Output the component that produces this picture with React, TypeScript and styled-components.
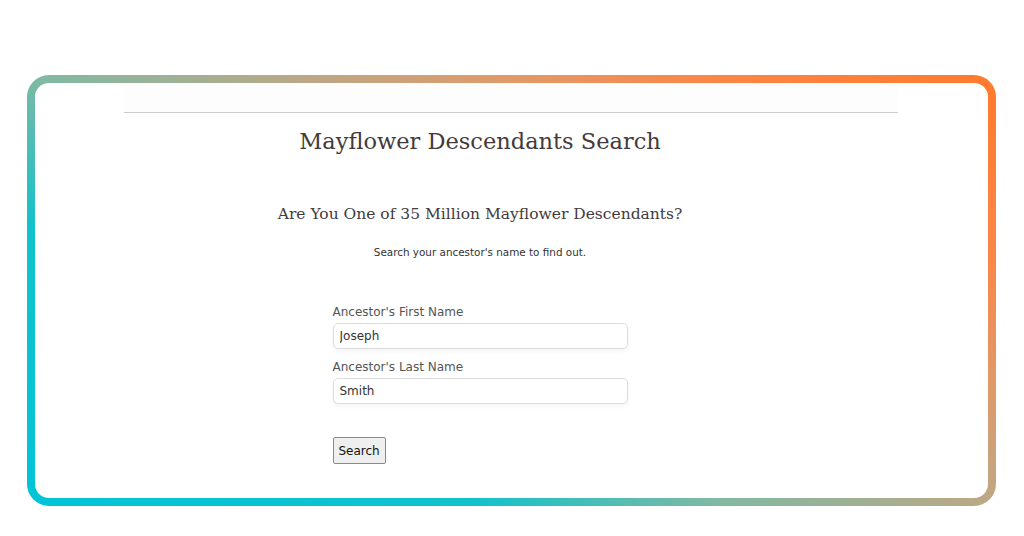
import styled, { createGlobalStyle } from 'styled-components';

const GlobalStyle = createGlobalStyle`
  html, body {
    margin: 0;
    padding: 0;
    background: #ffffff;
  }
  body {
    font-family: 'DejaVu Sans', Verdana, sans-serif;
  }
`;

const Frame = styled.div`
  box-sizing: border-box;
  margin: 75px 28px 0 27px;
  height: 431px;
  border: 8px solid transparent;
  border-radius: 22px;
  background:
    linear-gradient(#ffffff, #ffffff) padding-box,
    linear-gradient(
        32deg,
        #00c4d8 0%,
        #10c2cc 27%,
        #80b9a3 42%,
        #bba886 58%,
        #e09a6a 70%,
        #fb8648 82%,
        #ff7a2c 100%
      )
      border-box;
  overflow: hidden;
`;

const TopBar = styled.div`
  margin: 0 90px 0 89px;
  height: 29px;
  background: #fdfdfd;
  border-bottom: 1px solid #cccccc;
`;

const Content = styled.div`
  width: 640px;
  margin-left: 125px;
  display: flex;
  flex-direction: column;
  align-items: center;
`;

const Title = styled.h1`
  margin: 13px 0 0;
  font-family: 'DejaVu Serif', 'Liberation Serif', serif;
  font-weight: normal;
  font-size: 22.5px;
  line-height: 30px;
  color: #433b3b;
`;

const Subtitle = styled.h2`
  margin: 47px 0 0;
  font-family: 'DejaVu Serif', 'Liberation Serif', serif;
  font-weight: normal;
  font-size: 15.5px;
  line-height: 22px;
  color: #433b3b;
`;

const Lead = styled.p`
  margin: 19px 0 0;
  font-size: 10.4px;
  line-height: 16px;
  color: #333333;
`;

const Form = styled.form`
  width: 295px;
  margin-top: 44px;
  display: flex;
  flex-direction: column;
`;

const Label = styled.label`
  font-size: 12px;
  line-height: 16px;
  color: #555555;
  margin-bottom: 3px;
`;

const Input = styled.input`
  box-sizing: border-box;
  width: 100%;
  height: 26px;
  padding: 0 6px;
  margin-bottom: 10px;
  border: 1px solid #dcdcdc;
  border-radius: 5px;
  box-shadow: 0 3px 4px rgba(0, 0, 0, 0.04);
  font-family: 'DejaVu Sans', Verdana, sans-serif;
  font-size: 12px;
  color: #333333;
  background: #ffffff;
  outline: none;
`;

const Button = styled.button`
  align-self: flex-start;
  margin-top: 23px;
  height: 27px;
  padding: 0 5px;
  font-family: 'DejaVu Sans', Verdana, sans-serif;
  font-size: 12px;
  color: #111111;
  background: #efefef;
  border: 1px solid #8a8a8a;
  border-radius: 2px;
`;

export default function App() {
  return (
    <>
      <GlobalStyle />
      <Frame>
        <TopBar />
        <Content>
          <Title>Mayflower Descendants Search</Title>
          <Subtitle>Are You One of 35 Million Mayflower Descendants?</Subtitle>
          <Lead>Search your ancestor's name to find out.</Lead>
          <Form onSubmit={(e) => e.preventDefault()}>
            <Label htmlFor="first">Ancestor's First Name</Label>
            <Input id="first" defaultValue="Joseph" />
            <Label htmlFor="last">Ancestor's Last Name</Label>
            <Input id="last" defaultValue="Smith" />
            <Button type="submit">Search</Button>
          </Form>
        </Content>
      </Frame>
    </>
  );
}
